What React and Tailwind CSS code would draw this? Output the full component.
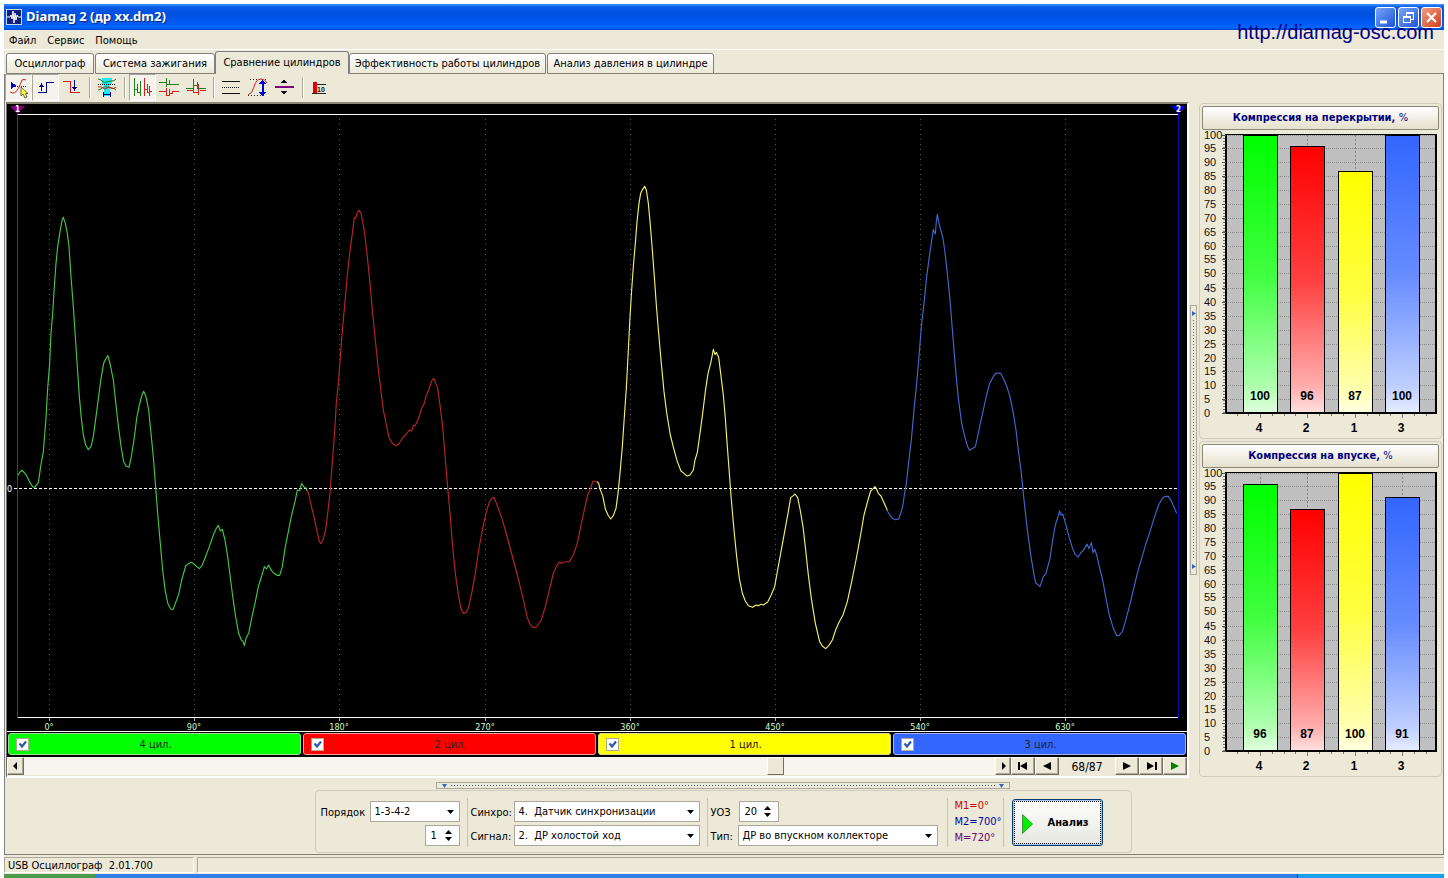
import React, { useState } from "react";

/* Cylinder traces: samples are stored in thirds of a plot unit, relative to `x0`. */
const TRACES = [
  {
    x0: 0,
    color: "#46c846",
    pts: "54,976 60,966 67,961 80,977 90,998 98,1010 104,1012 115,998 122,950 130,905 138,805 143,715 149,640 153,550 158,490 163,410 168,340 173,290 180,245 186,212 190,202 196,220 202,250 207,290 213,380 220,470 226,560 232,650 238,740 244,805 250,855 257,885 265,899 273,890 280,860 288,800 296,740 303,685 311,640 317,627 324,617 331,645 340,690 348,765 356,835 364,895 371,935 378,948 387,952 393,925 402,870 410,805 418,765 426,735 431,724 438,740 446,780 452,840 460,920 466,1000 473,1090 480,1170 488,1260 496,1325 504,1362 512,1376 519,1379 526,1360 536,1334 545,1290 557,1248 566,1241 574,1237 582,1242 590,1250 598,1256 606,1247 616,1222 628,1190 640,1155 648,1137 655,1126 661,1143 667,1138 675,1170 683,1220 690,1275 697,1330 706,1395 716,1450 724,1470 729,1474 733,1487 738,1465 746,1450 756,1400 765,1360 775,1310 785,1278 793,1250 799,1257 806,1245 813,1260 822,1270 831,1276 839,1276 847,1250 855,1195 865,1145 875,1095 885,1055 892,1020 899,1022 905,1000 911,1010 917,1013 922,1024",
  },
  {
    x0: 290,
    color: "#b92626",
    pts: "50,1022 55,1027 63,1065 72,1100 80,1140 88,1175 93,1181 99,1170 107,1140 113,1090 120,1030 126,950 133,860 139,760 146,690 151,620 158,530 165,455 172,375 179,310 187,250 193,203 197,205 202,187 208,181 213,190 219,220 224,250 232,320 240,400 248,490 256,570 264,650 272,715 280,780 289,825 298,865 307,880 317,887 328,880 338,863 348,853 358,840 365,843 371,825 375,828 385,807 395,775 403,760 408,738 416,720 425,693 431,685 436,697 443,715 450,765 458,830 465,915 472,1000 480,1090 488,1190 496,1270 505,1335 513,1375 520,1390 528,1388 535,1375 545,1330 556,1270 566,1200 577,1140 588,1090 598,1056 606,1045 612,1042 620,1062 634,1100 650,1155 666,1215 682,1275 698,1340 711,1400 720,1423 730,1433 739,1431 754,1410 766,1370 778,1320 790,1270 800,1248 808,1236 814,1240 822,1236 838,1235 850,1215 862,1180 872,1130 884,1075 893,1035 902,1015 908,995 915,993 922,996",
  },
  {
    x0: 580,
    color: "#f6f070",
    pts: "52,995 56,1000 60,1017 68,1037 76,1077 84,1095 92,1107 100,1097 108,1075 114,1030 120,970 127,890 133,800 139,715 144,620 150,500 155,420 160,350 166,280 171,215 177,160 182,130 188,118 194,109 199,120 205,160 211,225 217,300 223,380 229,465 236,550 244,640 252,725 261,795 271,855 281,895 292,935 303,963 312,970 321,978 330,975 340,960 345,930 352,907 360,850 368,790 376,725 384,670 392,640 396,620 400,598 405,614 409,607 416,622 422,670 430,735 436,805 442,890 448,970 454,1050 462,1140 470,1220 478,1285 487,1330 496,1353 505,1367 518,1372 528,1365 535,1367 543,1363 550,1365 563,1356 572,1338 584,1310 592,1265 602,1210 613,1150 624,1090 632,1043 640,1037 645,1032 653,1043 660,1077 669,1130 677,1200 685,1275 694,1345 706,1420 719,1475 727,1488 737,1496 746,1487 757,1470 767,1440 777,1417 789,1395 802,1355 815,1295 828,1230 840,1165 852,1095 864,1050 872,1023 880,1016 885,1010 890,1018 895,1030 903,1038 912,1058 922,1081",
  },
  {
    x0: 870,
    color: "#4169d2",
    pts: "50,1079 58,1093 67,1105 76,1109 86,1107 92,1090 98,1070 103,1035 109,1000 115,945 124,870 132,780 140,700 147,620 154,530 162,460 170,380 178,320 186,265 190,238 193,247 196,252 199,215 202,193 206,215 212,240 219,265 224,300 232,370 240,450 248,550 256,650 265,745 275,820 285,862 293,890 299,901 306,896 316,890 323,860 331,820 340,780 350,735 358,703 368,683 376,671 384,669 392,670 400,685 410,708 420,740 430,790 438,840 446,910 454,970 462,1050 472,1140 483,1220 494,1285 498,1300 504,1304 510,1310 520,1280 528,1270 540,1225 548,1170 556,1125 564,1100 569,1083 573,1096 578,1092 586,1118 597,1160 606,1190 615,1213 620,1217 624,1221 633,1208 641,1200 651,1182 657,1196 664,1178 669,1208 674,1198 680,1215 688,1250 698,1290 708,1345 718,1395 730,1435 740,1457 747,1456 757,1445 766,1415 778,1370 790,1320 802,1270 815,1225 828,1180 840,1145 852,1105 866,1065 877,1045 884,1039 895,1039 905,1055 920,1090",
  },
];

const ANGLES = [
  [49, "0°"], [194, "90°"], [339, "180°"], [485, "270°"],
  [630, "360°"], [775, "450°"], [920, "540°"], [1065, "630°"],
];

function Oscillogram() {
  return (
    <svg viewBox="7 104 1180 627" preserveAspectRatio="none" className="block min-h-0 w-full flex-1 bg-black font-['DejaVu_Sans_Condensed','Liberation_Sans',sans-serif]" role="img" aria-label="Осциллограмма">
      <g shapeRendering="crispEdges">
        <path d="M18 114.500H1178M18 717.500H1178" stroke="#fff" />
        {ANGLES.map(([x]) => (
          <g key={x}>
            <path d={`M${x + 0.5} 119V717`} stroke="#555" strokeDasharray="1 4" />
            <path d={`M${x + 0.5} 718V721`} stroke="#aaa" />
          </g>
        ))}
        <path d="M14 488.500H1178" stroke="#fff" strokeDasharray="3 2" />
        <path d="M17.500 106V718" stroke="#78207c" />
        <path d="M1178.500 106V718" stroke="#0a0ab4" />
      </g>
      {TRACES.map((t) => (
        <g key={t.x0} transform={`translate(${t.x0} 150) scale(0.33333)`}>
          <polyline points={t.pts} fill="none" stroke={t.color} strokeWidth="3.400" strokeLinejoin="round" />
        </g>
      ))}
      <path d="M10 106H25L17.500 114Z" fill="#800080" />
      <path d="M1171 106H1186L1178.500 114Z" fill="#0000e0" />
      <g fill="#fff" fontSize="8" fontWeight="bold" textAnchor="middle">
        <text x="17.500" y="112">1</text>
        <text x="1178.500" y="112">2</text>
      </g>
      <text x="7" y="492" fill="#fff" fontSize="9">0</text>
      <g fill="#ccffcc" fontSize="9" textAnchor="middle">
        {ANGLES.map(([x, label]) => (
          <text key={x} x={x} y="730">{label}</text>
        ))}
      </g>
    </svg>
  );
}

const BAR_X = [1243, 1290, 1338, 1385];
const BAR_FILL = ["#00ff00", "#ff0000", "#ffff00", "#3366ff"];
const BAR_NAME = ["4", "2", "1", "3"];

function BarPanel({ id, title, values }) {
  const y = (v) => 413 - v * 2.775;
  const steps = Array.from({ length: 21 }, (_, i) => i * 5);
  return (
    <section className="flex min-h-0 flex-1 flex-col rounded-[4px] border border-[#cfccbd] p-[2px]">
      <button type="button" className="h-6 shrink-0 rounded-[2px] border border-[#8a8778] bg-linear-to-b from-white to-[#e4e0cc] font-['DejaVu_Sans_Condensed','Liberation_Sans',sans-serif] text-[11px] font-bold text-[#000080]">
        {title} <span className="font-normal">%</span>
      </button>
      <svg viewBox="1202 131 237 305" preserveAspectRatio="none" className="block min-h-0 w-full flex-1 font-['Liberation_Sans',sans-serif]" role="img" aria-label={title}>
        <defs>
          <linearGradient id={id} x1="0" y1="0" x2="0" y2="1">
            <stop offset="0" stopColor="#fff" stopOpacity="0" />
            <stop offset="0.500" stopColor="#fff" stopOpacity="0.250" />
            <stop offset="0.900" stopColor="#fff" stopOpacity="0.680" />
            <stop offset="1" stopColor="#fff" stopOpacity="0.880" />
          </linearGradient>
        </defs>
        <g shapeRendering="crispEdges">
          <rect x="1226" y="135" width="210" height="278" fill="#c0c0c0" />
          {steps.map((v) => (
            <path key={v} d={`M1228 ${Math.round(y(v)) + 0.5}H1435`} stroke="#8c8c8c" strokeDasharray="1 1" />
          ))}
          {BAR_X.map((x) => (
            <path key={x} d={`M${x + 17.5} 136V413`} stroke="#808080" strokeDasharray="2 2" />
          ))}
          {BAR_X.map((x, i) => (
            <g key={x}>
              <rect x={x + 0.5} y={Math.round(y(values[i])) + 0.5} width="34" height={413 - Math.round(y(values[i]))} fill={BAR_FILL[i]} stroke="#000" />
              <rect x={x + 1} y={Math.round(y(values[i])) + 1} width="33" height={412 - Math.round(y(values[i]))} fill={`url(#${id})`} />
            </g>
          ))}
          <path d="M1225 135.500H1437" stroke="#000" />
          <path d="M1226 135V414M1436 135V414" stroke="#000" strokeWidth="2" />
          <path d="M1225 413H1437" stroke="#000" strokeWidth="2" />
          <path d="M1224 136V413" stroke="#777" strokeWidth="2" strokeDasharray="1 2" />
          {steps.map((v) => (
            <path key={v} d={`M1222 ${Math.round(y(v)) + 0.5}H1226`} stroke="#555" />
          ))}
          <path d="M1237.500 414V416M1248.500 414V416M1260.500 414V418M1272.500 414V416M1284.500 414V416M1295.500 414V416M1307.500 414V418M1319.500 414V416M1331.500 414V416M1343.500 414V416M1355.500 414V418M1367.500 414V416M1379.500 414V416M1390.500 414V416M1402.500 414V418M1414.500 414V416M1426.500 414V416" stroke="#777" />
        </g>
        <g fontSize="11" fill="#111">
          {steps.map((v) => (
            <text key={v} x="1204" y={Math.round(y(v)) + 4}>{v}</text>
          ))}
        </g>
        <g fontSize="12" fontWeight="bold" fill="#000" textAnchor="middle">
          {BAR_X.map((x, i) => (
            <React.Fragment key={x}>
              <text x={x + 17} y="400">{values[i]}</text>
              <text x={x + 16} y="432">{BAR_NAME[i]}</text>
            </React.Fragment>
          ))}
        </g>
      </svg>
    </section>
  );
}

function Tool({ label, on, box, children }) {
  return (
    <button type="button" aria-label={label} aria-pressed={!!on} className={on ? "h-[27px] w-[27px] border border-t-[#aaa797] border-l-[#aaa797] border-r-white border-b-white bg-[#f5f3ec]" : "h-[27px] w-[27px] border border-transparent"}>
      <svg viewBox={box} className="block h-[25px] w-[25px]" fill="none" shapeRendering="crispEdges">{children}</svg>
    </button>
  );
}

const Sep = () => <span className="mx-[3px] mt-[3px] h-[21px] w-[2px] border-l border-[#aca899] border-r border-r-white" />;

function Toolbar() {
  return (
    <div className="flex h-7 shrink-0 items-start" role="toolbar" aria-label="Инструменты">
      <Tool label="Маркер" on box="6 75 25 25">
        <path d="M11 82L16 85.500L11 89Z" fill="#0000d0" />
        <path d="M11 86.500H26" stroke="#222" strokeDasharray="1 1" />
        <path d="M10 92Q15 95 18 89T22 80Q24 79 26 80" stroke="#d02020" shapeRendering="auto" />
        <path d="M21 87V96L23 94L25 98L27 97L25.500 93.500H28Z" fill="#ffff30" stroke="#444" strokeWidth="0.800" shapeRendering="auto" />
      </Tool>
      <Tool label="Передний фронт" on box="33 75 25 25">
        <path d="M38 92.500H46.500V82.500H54" stroke="#000090" />
        <path d="M41.500 84V91" stroke="#000090" />
        <path d="M39 87H44L41.500 83Z" fill="#000090" />
      </Tool>
      <Tool label="Задний фронт" box="60 75 25 25">
        <path d="M63 81.500H70.500V92.500H80" stroke="#d02020" />
        <path d="M74.500 80V89" stroke="#000090" />
        <path d="M72 87H77L74.500 91Z" fill="#000090" />
      </Tool>
      <Sep />
      <Tool label="Цилиндр" box="95 75 25 25">
        <path d="M102 78H112V83L110 86V96H104V86L102 83Z" fill="#20e8f0" />
        <path d="M98 79Q100 79 102 81T107 82T112 81T116 79M98 90Q100 90 102 88T107 87T112 88T116 90" stroke="#208020" shapeRendering="auto" />
        <path d="M98 87Q101 86 103 88T107 88T111 88T116 87" stroke="#c02020" shapeRendering="auto" />
        <path d="M98 84.500H116" stroke="#000" strokeDasharray="1 1" />
        <path d="M103 94.500H111M103.500 92V97M110.500 92V97" stroke="#000080" />
      </Tool>
      <Sep />
      <Tool label="Последовательно" on box="130 75 25 25">
        <path d="M134.500 78V96M134 89.500H137.500M137.500 84V93M137 92.500H140.500V81V96" stroke="#208020" />
        <path d="M144.500 78V96M144 89.500H147.500M147.500 84V93M147 92.500H149.500V86V96M149 91.500H152" stroke="#d02020" />
      </Tool>
      <Tool label="Раздельно" box="157 75 25 25">
        <path d="M159 82.500H166.500V78V87V84.500H169.500V80V84.500H179" stroke="#208020" />
        <path d="M159 91.500H166.500V88V95.500H169.500V89V93.500H172V91.500H179" stroke="#d02020" />
      </Tool>
      <Tool label="Наложение" box="184 75 25 25">
        <path d="M187 90.500H193V92.500H198.500V84V95V88.500H206M200 90.500H206" stroke="#d02020" />
        <path d="M186 88.500H193.500V79V93V85.500H197.500V82V88.500H206" stroke="#208020" />
      </Tool>
      <Sep />
      <Tool label="Линии" box="219 75 25 25">
        <path d="M222 81.500H240M222 93.500H240" stroke="#111" />
        <path d="M222 87.500H240" stroke="#111" strokeDasharray="1 1" />
      </Tool>
      <Tool label="Амплитуда" box="246 75 25 25">
        <path d="M250 79.500H268M248 95.500H264" stroke="#222" strokeDasharray="1 2" />
        <path d="M248 95Q252 94 254 87Q256 79 261 79Q265 79 267 83" stroke="#d02020" shapeRendering="auto" />
        <path d="M262.500 82V94" stroke="#0000d0" strokeWidth="2" />
        <path d="M258 84H267L262.500 80ZM258 92H267L262.500 96Z" fill="#0000d0" />
      </Tool>
      <Tool label="Ноль" box="273 75 25 25">
        <path d="M275 87H294" stroke="#800080" strokeWidth="2" />
        <path d="M281 83H287L284 79ZM281 91H287L284 95Z" fill="#111" />
      </Tool>
      <Sep />
      <Tool label="Таблица значений" box="308 75 25 25">
        <rect x="313" y="82" width="4" height="11" fill="#e00000" />
        <path d="M312 93.500H326M317 84.500H326" stroke="#222" />
        <text x="317" y="92" fontSize="7" fontWeight="bold" fill="#111" className="font-['Liberation_Sans',sans-serif]">10</text>
      </Tool>
    </div>
  );
}

const TABS = [
  ["Осциллограф", "w-[88px] mr-px"],
  ["Система зажигания", "w-[120px]"],
  ["Сравнение цилиндров", "w-[134px]"],
  ["Эффективность работы цилиндров", "w-[197px] mr-px"],
  ["Анализ давления в цилиндре", "w-[167px]"],
];

function Tabs() {
  return (
    <div role="tablist" className="flex h-6 shrink-0 items-end pl-[2px]">
      {TABS.map(([name, w], i) => (
        <button
          key={name}
          type="button"
          role="tab"
          aria-selected={i === 2}
          className={`${w} ${i === 2 ? "h-[23px] bg-[#ece9d8]" : "h-[21px] border-b bg-linear-to-b from-white to-[#ece9d8] pt-px"} shrink-0 rounded-t-[3px] border-x border-t border-[#808080] whitespace-nowrap`}
        >
          {name}
        </button>
      ))}
      <div className="flex-1 self-stretch border-b border-[#808080]" />
    </div>
  );
}

const CYLS = [
  ["4 цил.", "bg-[#00ff00] border-[#9adf9a]"],
  ["2 цил.", "bg-[#ff0000] border-[#ff9a9a]"],
  ["1 цил.", "bg-[#ffff00] border-[#dcdc90]"],
  ["3 цил.", "bg-[#3366ff] border-[#a0b4f0]"],
];

function CylinderRow() {
  return (
    <div className="grid h-[26px] shrink-0 grid-cols-4 border-t border-white bg-black pt-px pb-[2px]">
      {CYLS.map(([name, color]) => (
        <label key={name} className={`${color} mx-px flex items-center rounded-[3px] border pt-px`}>
          <span className="relative ml-[7px] block h-[13px] w-[13px]">
            <input type="checkbox" defaultChecked className="peer block h-[13px] w-[13px] appearance-none border border-[#b0a890] bg-white" />
            <svg viewBox="0 0 13 13" className="pointer-events-none absolute top-0 left-0 hidden h-[13px] w-[13px] peer-checked:block">
              <path d="M3.500 5.500L6 8.500L10 3.500" fill="none" stroke="#2c5aa8" strokeWidth="2.200" />
            </svg>
          </span>
          <span className="mr-[18px] flex-1 pt-px text-center text-[#222]">{name}</span>
        </label>
      ))}
    </div>
  );
}

const RAISED = "flex shrink-0 items-center justify-center border border-t-white border-l-white border-r-[#716f64] border-b-[#716f64] bg-[#ece9d8] shadow-[inset_-1px_-1px_0_#aca899]";

function PageButton({ label, width, color, d }) {
  return (
    <button type="button" aria-label={label} className={`${RAISED} ${width} h-[18px]`}>
      <svg viewBox="0 0 12 8" className="h-2 w-3" fill={color}><path d={d} /></svg>
    </button>
  );
}

function ScrollRow() {
  const [page, setPage] = useState(68);
  return (
    <div className="flex h-[19px] shrink-0 items-start bg-[#ece9d8]">
      <PageButton label="Прокрутить влево" width="w-[17px]" color="#000" d="M7 0V8L3 4Z" />
      <input
        type="range"
        aria-label="Кадр"
        min="1"
        max="87"
        value={page}
        onChange={(e) => setPage(Number(e.target.value))}
        className="h-[18px] min-w-0 flex-1 appearance-none bg-[#f7f5ee] [&::-webkit-slider-thumb]:h-[18px] [&::-webkit-slider-thumb]:w-[17px] [&::-webkit-slider-thumb]:appearance-none [&::-webkit-slider-thumb]:border [&::-webkit-slider-thumb]:border-t-white [&::-webkit-slider-thumb]:border-r-[#716f64] [&::-webkit-slider-thumb]:border-b-[#716f64] [&::-webkit-slider-thumb]:border-l-white [&::-webkit-slider-thumb]:bg-[#ece9d8]"
      />
      <PageButton label="Прокрутить вправо" width="w-4" color="#000" d="M5 0V8L9 4Z" />
      <PageButton label="Первый кадр" width="w-6" color="#000" d="M1 0H3V8H1ZM10 0V8L3 4Z" />
      <PageButton label="Предыдущий кадр" width="w-6" color="#000" d="M10 0V8L2 4Z" />
      <output className="w-14 shrink-0 pt-px text-center text-xs leading-[18px]">{page}/87</output>
      <PageButton label="Следующий кадр" width="w-6" color="#000" d="M2 0V8L10 4Z" />
      <PageButton label="Последний кадр" width="w-6" color="#000" d="M2 0V8L9 4ZM10 0H12V8H10Z" />
      <PageButton label="Воспроизвести" width="w-6" color="#008000" d="M2 0V8L10 4Z" />
    </div>
  );
}

function Select({ id, width, options }) {
  return (
    <span className={`relative block h-[21px] ${width}`}>
      <select id={id} className="block h-full w-full appearance-none border border-[#aca899] bg-white pt-px pr-5 pl-1 whitespace-pre">
        {options.map((o) => <option key={o}>{o}</option>)}
      </select>
      <svg viewBox="0 0 7 4" className="pointer-events-none absolute top-[9px] right-[6px] h-1 w-[7px]"><path d="M0 0H7L3.500 4Z" /></svg>
    </span>
  );
}

function Spin({ id, label, width, initial }) {
  const [v, setV] = useState(initial);
  return (
    <span className={`flex h-[21px] border border-[#aca899] bg-white ${width}`}>
      <input id={id} aria-label={label} value={v} onChange={(e) => setV(Number(e.target.value) || 0)} className="w-0 min-w-0 flex-1 bg-white pt-px pl-[5px]" />
      <span className="flex w-4 flex-col items-center justify-center gap-[3px] pr-1">
        <button type="button" aria-label="Больше" onClick={() => setV(v + 1)}><svg viewBox="0 0 7 4" className="block h-1 w-[7px]"><path d="M0 4H7L3.500 0Z" /></svg></button>
        <button type="button" aria-label="Меньше" onClick={() => setV(v - 1)}><svg viewBox="0 0 7 4" className="block h-1 w-[7px]"><path d="M0 0H7L3.500 4Z" /></svg></button>
      </span>
    </span>
  );
}

const Rule = () => <span className="h-[49px] w-px self-center bg-[#c6c3b4]" />;

function Controls() {
  return (
    <div className="flex h-[63px] w-[817px] max-w-full items-center rounded-[4px] border border-[#cfccbd] pt-px pl-[5px]">
      <div className="mr-[7px] flex w-[139px] flex-col gap-[3px] pt-[3px]">
        <div className="flex items-center justify-between">
          <label htmlFor="order" className="pt-[3px]">Порядок</label>
          <Select id="order" width="w-[90px]" options={["1-3-4-2"]} />
        </div>
        <div className="flex justify-end">
          <Spin id="first" label="Первый цилиндр" width="w-[35px]" initial={1} />
        </div>
      </div>
      <Rule />
      <div className="mr-[7px] ml-[3px] grid grid-cols-[43px_186px] items-center gap-y-[3px] pt-[3px]">
        <label htmlFor="sync" className="pt-[3px]">Синхро:</label>
        <Select id="sync" width="w-full" options={["4.\u00a0 Датчик синхронизации"]} />
        <label htmlFor="signal" className="pt-[3px]">Сигнал:</label>
        <Select id="signal" width="w-full" options={["2.\u00a0 ДР холостой ход"]} />
      </div>
      <Rule />
      <div className="mr-[9px] ml-[3px] grid grid-cols-[27px_200px] items-center gap-y-[3px] pt-[3px]">
        <label htmlFor="uoz" className="pt-[3px]">УОЗ</label>
        <Spin id="uoz" width="w-10 ml-px" initial={20} />
        <label htmlFor="kind" className="pt-[3px]">Тип:</label>
        <Select id="kind" width="w-full" options={["ДР во впускном коллекторе"]} />
      </div>
      <Rule />
      <div className="ml-[7px] flex w-12 flex-col leading-4">
        <span className="text-[#d00000]">M1=0°</span>
        <span className="text-[#0000b0]">M2=700°</span>
        <span className="text-[#700070]">M=720°</span>
      </div>
      <Rule />
      <button type="button" className="ml-2 flex h-[47px] w-[91px] items-center rounded-[3px] border border-[#003c74] bg-linear-to-b from-white to-[#e6e6e0] p-px text-[11px] font-bold shadow-[inset_0_0_0_1px_#a8c4ec]">
        <span className="flex h-full w-full items-center border border-dotted border-black pt-[3px] pl-[7px]">
          <svg viewBox="0 0 11 20" className="mr-[15px] h-5 w-[11px]"><path d="M0.500 0.500V19.500L10.500 10Z" fill="#00ee00" stroke="#3a9a3a" /></svg>
          Анализ
        </span>
      </button>
    </div>
  );
}

function TitleBar() {
  return (
    <header className="flex h-[26px] shrink-0 items-center bg-[linear-gradient(180deg,#3a93ff_0%,#0a5ae6_12%,#0050e0_40%,#005cf5_75%,#0066ff_90%,#0046c8_100%)] pr-[2px] pl-[2px]">
      <svg viewBox="0 0 16 16" className="h-4 w-4">
        <rect x="0.500" y="0.500" width="15" height="15" fill="#10207c" stroke="#c8d8f4" />
        <path d="M1 8H4L5 6L6 10L7 2L8 14L9 4L10 11L11 6L12 8H15" fill="none" stroke="#fff" />
      </svg>
      <h1 className="ml-1 flex-1 font-['Noto_Sans',sans-serif] text-[13px] font-bold text-white [text-shadow:1px_1px_#0a2a80]">Diamag 2 (др xx.dm2)</h1>
      <div className="flex gap-[2px]">
        <button type="button" aria-label="Свернуть" className="h-[21px] w-[21px] rounded-[3px] border border-white bg-linear-to-br from-[#7aa4f5] to-[#1c52dc]">
          <svg viewBox="0 0 19 19"><path d="M4 14H11" stroke="#fff" strokeWidth="3" /></svg>
        </button>
        <button type="button" aria-label="Восстановить" className="h-[21px] w-[21px] rounded-[3px] border border-white bg-linear-to-br from-[#7aa4f5] to-[#1c52dc]">
          <svg viewBox="0 0 19 19" fill="none" stroke="#fff" shapeRendering="crispEdges"><path d="M7.500 8V4.500H14.500V11.500H12M7 5.500H15M4.500 8.500H11.500V14.500H4.500ZM4 9.500H12" /></svg>
        </button>
        <button type="button" aria-label="Закрыть" className="h-[21px] w-[21px] rounded-[3px] border border-white bg-linear-to-br from-[#f09a80] to-[#d03c10]">
          <svg viewBox="0 0 19 19"><path d="M5 5L14 14M14 5L5 14" stroke="#fff" strokeWidth="2.200" /></svg>
        </button>
      </div>
    </header>
  );
}

export default function App() {
  return (
    <div className="relative flex h-screen min-h-[640px] flex-col bg-white px-1 pt-1 font-['DejaVu_Sans_Condensed','Liberation_Sans',sans-serif] text-[11px] text-black">
      <TitleBar />
      <div className="flex min-h-0 flex-1 flex-col bg-[#ece9d8]">
        <nav className="flex h-5 shrink-0 items-center gap-[11px] border-b border-white pt-[3px] pl-[5px]">
          <button type="button">Файл</button>
          <button type="button">Сервис</button>
          <button type="button">Помощь</button>
        </nav>
        <Tabs />
        <main className="flex min-h-0 flex-1 flex-col border-x border-b border-[#808080]">
          <Toolbar />
          <div className="flex min-h-0 flex-1 pr-px pl-px">
            <div className="flex min-w-0 flex-1 flex-col border-t-2 border-r-2 border-b-2 border-l border-t-[#8a8778] border-r-white border-b-white border-l-[#716f64]">
              <Oscillogram />
              <CylinderRow />
              <ScrollRow />
            </div>
            <div className="flex w-[10px] shrink-0 flex-col items-start justify-center pl-px">
              <div className="flex h-[270px] w-[7px] flex-col items-center justify-between border border-[#aca899] py-[5px]">
                <svg viewBox="0 0 4 5" className="h-[5px] w-1" fill="#3166b4"><path d="M0 0V5L4 2.500Z" /></svg>
                <span className="my-1 w-px flex-1 bg-[repeating-linear-gradient(180deg,#3166b4_0_1px,transparent_1px_3px)]" />
                <svg viewBox="0 0 4 5" className="h-[5px] w-1" fill="#3166b4"><path d="M0 0V5L4 2.500Z" /></svg>
              </div>
            </div>
            <aside className="flex w-[243px] shrink-0 flex-col gap-[2px] pt-px pb-px">
              <BarPanel id="overlap" title="Компрессия на перекрытии," values={[100, 96, 87, 100]} />
              <BarPanel id="intake" title="Компрессия на впуске," values={[96, 87, 100, 91]} />
            </aside>
          </div>
          <div className="flex shrink-0 flex-col items-center gap-px pt-1 pr-[2px] pb-px">
            <div className="flex h-[7px] w-[574px] max-w-full items-center border border-[#aca899] px-[5px]">
              <svg viewBox="0 0 5 4" className="h-1 w-[5px]" fill="#3166b4"><path d="M0 0H5L2.500 4Z" /></svg>
              <span className="mx-1 h-px flex-1 bg-[repeating-linear-gradient(90deg,#3166b4_0_1px,transparent_1px_3px)]" />
              <svg viewBox="0 0 5 4" className="h-1 w-[5px]" fill="#3166b4"><path d="M0 0H5L2.500 4Z" /></svg>
            </div>
            <Controls />
          </div>
        </main>
        <footer className="flex h-[19px] shrink-0 items-end gap-[3px] pb-px text-[11px]">
          <span className="h-4 w-[190px] border-t border-r border-b border-l border-t-[#aca899] border-r-white border-b-white border-l-[#aca899] pl-[3px] leading-[15px] whitespace-pre">USB Осциллограф  2.01.700</span>
          <span className="h-4 flex-1 border-t border-l border-b border-t-[#aca899] border-b-white border-l-[#aca899]" />
        </footer>
      </div>
      <div className="flex h-1 shrink-0 bg-[#2f80e8]">
        <span className="w-[92px] rounded-r-[3px] bg-[#4a9a4a]" />
        <span className="flex-1" />
        <span className="w-[147px] border-l border-[#0a4a90] bg-[#1aa0f0]" />
      </div>
      <a href="http://diamag-osc.com" className="absolute top-5 right-[14px] font-['Liberation_Sans',sans-serif] text-xl leading-6 text-[#000080]">http://diamag-osc.com</a>
    </div>
  );
}
